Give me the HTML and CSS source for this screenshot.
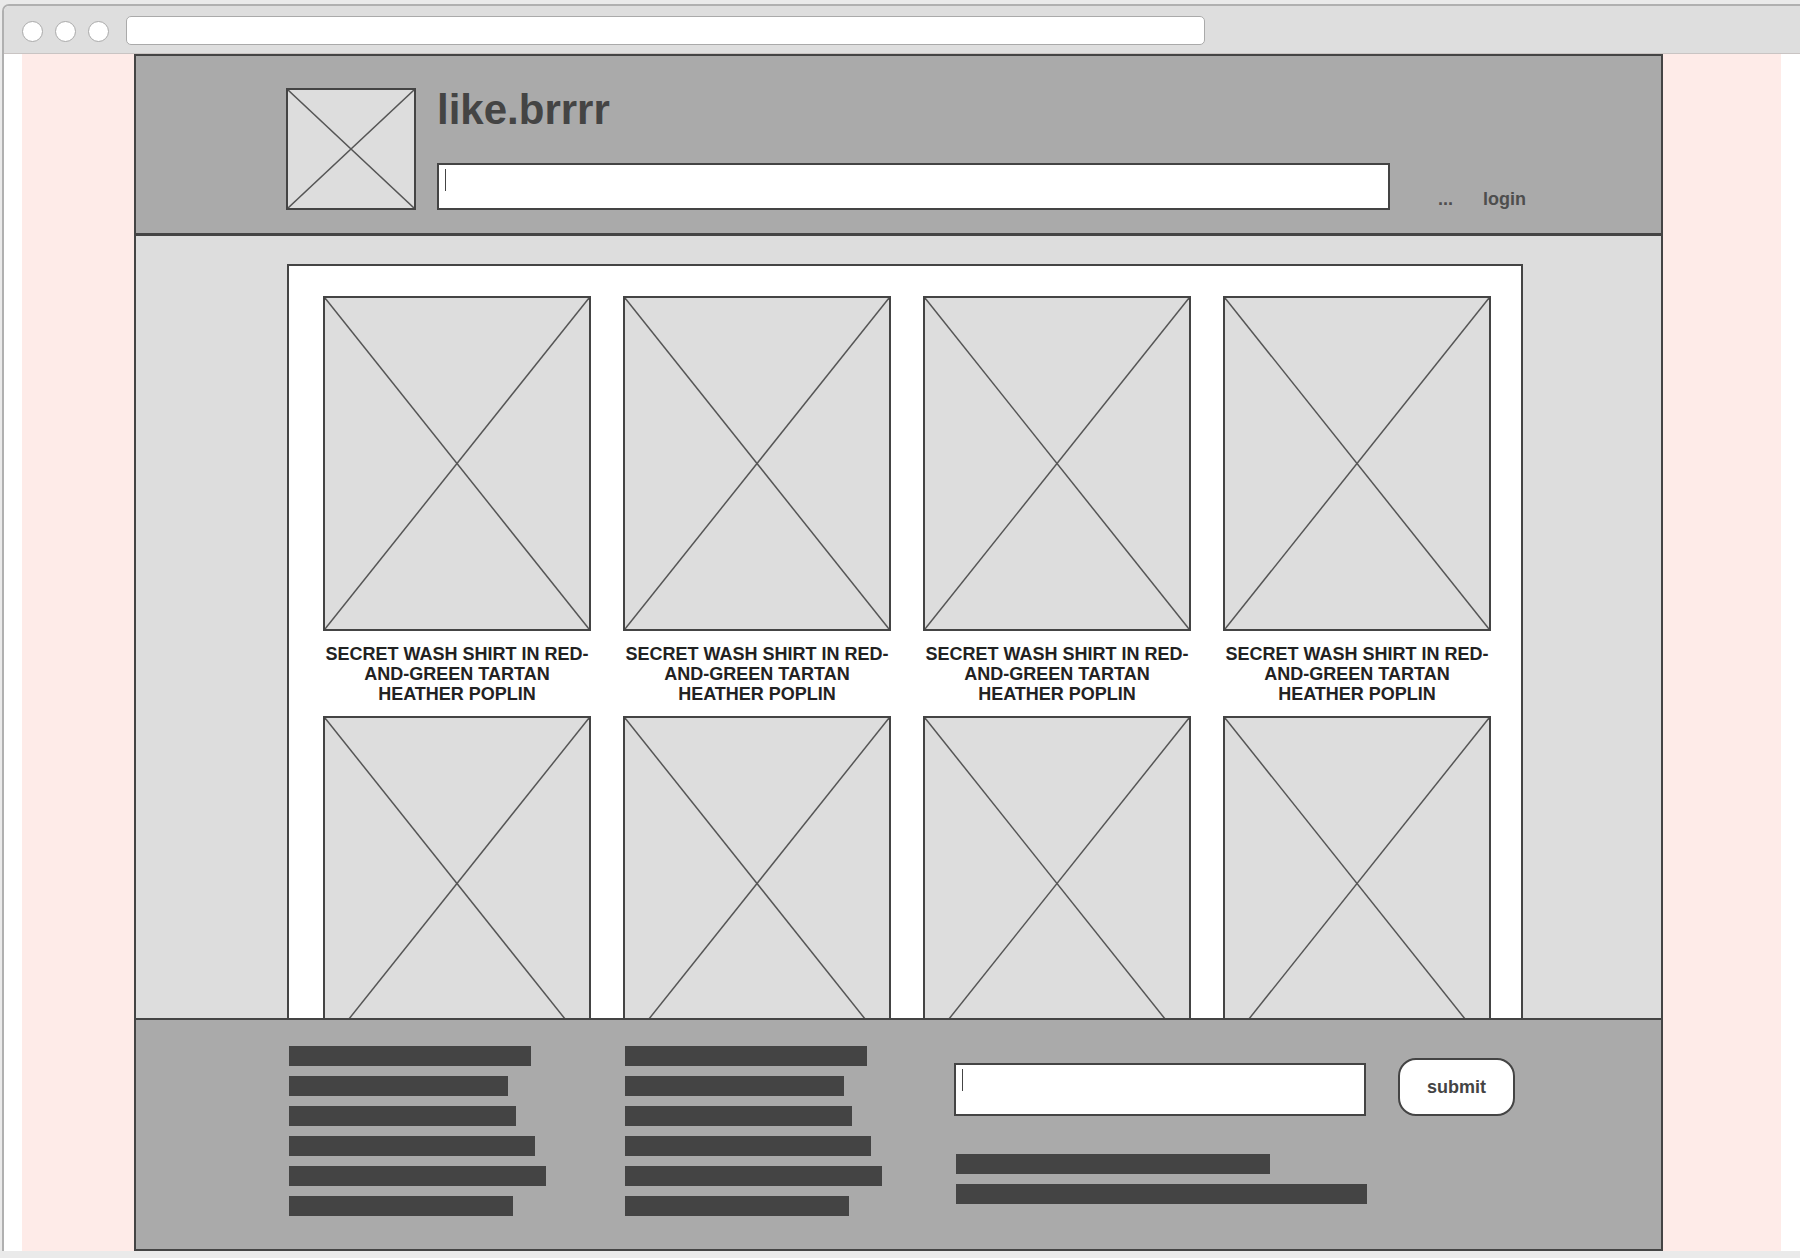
FILE: index.html
```html
<!DOCTYPE html>
<html lang="en">
<head>
  <meta charset="UTF-8">
  <meta name="viewport" content="width=device-width, initial-scale=1.0">
  <title>like.brrrr</title>
  <link rel="stylesheet" href="styles.css">
</head>
<body>

<div class="window">
  <div class="toolbar">
    <span class="dot"></span>
    <span class="dot"></span>
    <span class="dot"></span>
    <div class="address"></div>
  </div>

  <div class="viewport">
    <div class="page">
      <div class="frame">

        <div class="header">
          <div class="placeholder logo">
            <svg viewBox="0 0 100 100" preserveAspectRatio="none"><line x1="0" y1="0" x2="100" y2="100"/><line x1="100" y1="0" x2="0" y2="100"/></svg>
          </div>
          <div class="brand">
            <h1 class="title">like.brrrr</h1>
            <div class="search-row">
              <div class="field search"><span class="caret"></span></div>
              <div class="nav">
                <span>...</span>
                <span>login</span>
              </div>
            </div>
          </div>
        </div>

        <div class="main">
          <div class="catalog">
            <div class="card">
              <div class="placeholder thumb"><svg viewBox="0 0 100 100" preserveAspectRatio="none"><line x1="0" y1="0" x2="100" y2="100"/><line x1="100" y1="0" x2="0" y2="100"/></svg></div>
              <div class="name">SECRET WASH SHIRT IN RED-AND-GREEN TARTAN HEATHER POPLIN</div>
            </div>
            <div class="card">
              <div class="placeholder thumb"><svg viewBox="0 0 100 100" preserveAspectRatio="none"><line x1="0" y1="0" x2="100" y2="100"/><line x1="100" y1="0" x2="0" y2="100"/></svg></div>
              <div class="name">SECRET WASH SHIRT IN RED-AND-GREEN TARTAN HEATHER POPLIN</div>
            </div>
            <div class="card">
              <div class="placeholder thumb"><svg viewBox="0 0 100 100" preserveAspectRatio="none"><line x1="0" y1="0" x2="100" y2="100"/><line x1="100" y1="0" x2="0" y2="100"/></svg></div>
              <div class="name">SECRET WASH SHIRT IN RED-AND-GREEN TARTAN HEATHER POPLIN</div>
            </div>
            <div class="card">
              <div class="placeholder thumb"><svg viewBox="0 0 100 100" preserveAspectRatio="none"><line x1="0" y1="0" x2="100" y2="100"/><line x1="100" y1="0" x2="0" y2="100"/></svg></div>
              <div class="name">SECRET WASH SHIRT IN RED-AND-GREEN TARTAN HEATHER POPLIN</div>
            </div>
            <div class="card">
              <div class="placeholder thumb"><svg viewBox="0 0 100 100" preserveAspectRatio="none"><line x1="0" y1="0" x2="100" y2="100"/><line x1="100" y1="0" x2="0" y2="100"/></svg></div>
              <div class="name">SECRET WASH SHIRT IN RED-AND-GREEN TARTAN HEATHER POPLIN</div>
            </div>
            <div class="card">
              <div class="placeholder thumb"><svg viewBox="0 0 100 100" preserveAspectRatio="none"><line x1="0" y1="0" x2="100" y2="100"/><line x1="100" y1="0" x2="0" y2="100"/></svg></div>
              <div class="name">SECRET WASH SHIRT IN RED-AND-GREEN TARTAN HEATHER POPLIN</div>
            </div>
            <div class="card">
              <div class="placeholder thumb"><svg viewBox="0 0 100 100" preserveAspectRatio="none"><line x1="0" y1="0" x2="100" y2="100"/><line x1="100" y1="0" x2="0" y2="100"/></svg></div>
              <div class="name">SECRET WASH SHIRT IN RED-AND-GREEN TARTAN HEATHER POPLIN</div>
            </div>
            <div class="card">
              <div class="placeholder thumb"><svg viewBox="0 0 100 100" preserveAspectRatio="none"><line x1="0" y1="0" x2="100" y2="100"/><line x1="100" y1="0" x2="0" y2="100"/></svg></div>
              <div class="name">SECRET WASH SHIRT IN RED-AND-GREEN TARTAN HEATHER POPLIN</div>
            </div>
          </div>
        </div>

        <div class="footer">
          <div class="links">
            <div class="bar" style="width:242px"></div>
            <div class="bar" style="width:219px"></div>
            <div class="bar" style="width:227px"></div>
            <div class="bar" style="width:246px"></div>
            <div class="bar" style="width:257px"></div>
            <div class="bar" style="width:224px"></div>
          </div>
          <div class="links second">
            <div class="bar" style="width:242px"></div>
            <div class="bar" style="width:219px"></div>
            <div class="bar" style="width:227px"></div>
            <div class="bar" style="width:246px"></div>
            <div class="bar" style="width:257px"></div>
            <div class="bar" style="width:224px"></div>
          </div>
          <div class="signup">
            <div class="signup-row">
              <div class="field email"><span class="caret"></span></div>
              <button class="submit-btn">submit</button>
            </div>
            <div class="notes">
              <div class="bar" style="width:314px"></div>
              <div class="bar" style="width:411px"></div>
            </div>
          </div>
        </div>

      </div>
    </div>
  </div>
</div>

</body>
</html>
```

FILE: styles.css
```css
* {
  box-sizing: border-box;
}

body {
  margin: 0;
  background-color: #eaeaea;
  font-family: "Liberation Sans", Arial, sans-serif;
  overflow: hidden;
}

.window {
  margin: 4px 0 0 2px;
  width: 1810px;
  height: 1247px;
  border: 2px solid #b0b0b0;
  border-bottom: none;
  border-radius: 7px 7px 0 0;
  background-color: #fff;
  overflow: hidden;
}

/* browser chrome */
.toolbar {
  height: 48px;
  background-color: #dedede;
  border-bottom: 1px solid #c9c4c3;
  display: flex;
  align-items: flex-start;
  padding-left: 18px;
}

.dot {
  width: 21px;
  height: 21px;
  margin-top: 15px;
  margin-right: 12px;
  border: 1.5px solid #aaa;
  border-radius: 50%;
  background-color: #fff;
}

.address {
  width: 1079px;
  height: 29px;
  margin: 10px 0 0 5px;
  border: 1.5px solid #aaa;
  border-radius: 5px;
  background-color: #fff;
}

.viewport {
  display: flex;
  padding-left: 18px;
}

.page {
  width: 1759px;
  padding-left: 112px;
  background-color: #feebe8;
}

.frame {
  width: 1529px;
  height: 1197px;
  border: 2px solid #444;
  display: flex;
  flex-direction: column;
  overflow: hidden;
}

/* placeholders */
.placeholder {
  border: 2px solid #444;
  background-color: #ddd;
}

.placeholder svg {
  display: block;
  width: 100%;
  height: 100%;
}

.placeholder line {
  stroke: #555;
  stroke-width: 1.5;
  vector-effect: non-scaling-stroke;
}

/* header */
.header {
  height: 180px;
  flex-shrink: 0;
  background-color: #aaa;
  border-bottom: 3px solid #444;
  display: flex;
  align-items: flex-start;
  padding: 32px 0 0 150px;
}

.logo {
  width: 130px;
  height: 122px;
}

.brand {
  margin-left: 21px;
}

.title {
  margin: -2px 0 0;
  font-size: 42px;
  line-height: 48px;
  font-weight: bold;
  color: #444;
}

.search-row {
  margin-top: 29px;
  display: flex;
  align-items: flex-end;
}

.field {
  border: 2px solid #444;
  background-color: #fff;
  padding: 4px 0 0 6px;
}

.caret {
  display: block;
  width: 1px;
  height: 22px;
  background-color: #444;
}

.search {
  width: 953px;
  height: 47px;
}

.nav {
  margin-left: 48px;
  display: flex;
  gap: 30px;
  font-size: 18px;
  line-height: 22px;
  font-weight: bold;
  color: #4e4e4e;
}

/* products */
.main {
  flex: 1;
  background-color: #ddd;
  overflow: hidden;
  padding: 28px 0 0 151px;
}

.catalog {
  width: 1236px;
  border: 2px solid #444;
  background-color: #fff;
  padding: 30px 30px 0 34px;
  display: grid;
  grid-template-columns: repeat(4, 268px);
  column-gap: 32px;
  row-gap: 12px;
}

.thumb {
  height: 335px;
}

.name {
  margin-top: 13px;
  font-size: 18px;
  line-height: 20px;
  font-weight: bold;
  text-align: center;
  color: #222;
}

/* footer */
.footer {
  height: 231px;
  flex-shrink: 0;
  background-color: #aaa;
  border-top: 2px solid #444;
  display: flex;
  align-items: flex-start;
  padding: 26px 0 0 153px;
}

.links {
  width: 336px;
  display: flex;
  flex-direction: column;
  gap: 10px;
}

.links.second {
  width: 329px;
}

.bar {
  height: 20px;
  background-color: #444;
}

.signup {
  margin-top: 12px;
}

.signup-row {
  display: flex;
  align-items: flex-end;
  gap: 32px;
}

.email {
  width: 412px;
  height: 53px;
}

.submit-btn {
  width: 117px;
  height: 58px;
  border: 2px solid #444;
  border-radius: 18px;
  background-color: #fff;
  font-family: "Liberation Sans", Arial, sans-serif;
  font-size: 18px;
  font-weight: bold;
  color: #444;
  cursor: pointer;
}

.notes {
  margin: 38px 0 0 2px;
  display: flex;
  flex-direction: column;
  gap: 10px;
}
```
